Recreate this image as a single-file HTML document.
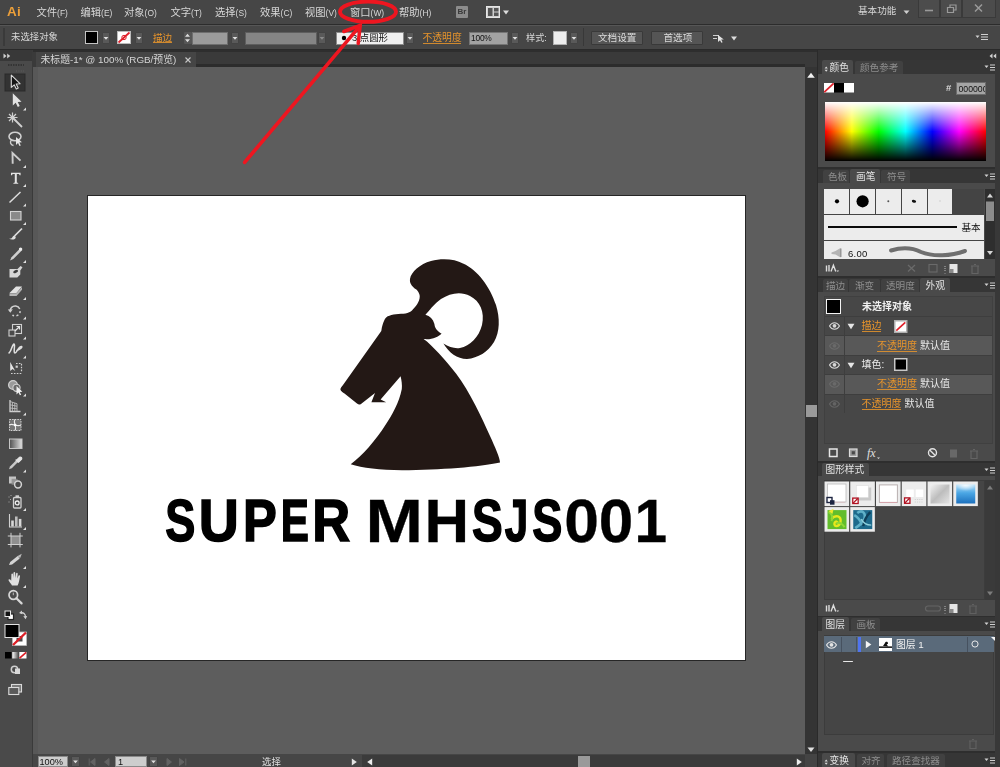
<!DOCTYPE html>
<html lang="zh"><head><meta charset="utf-8"><title>Adobe Illustrator</title>
<style>
html,body{margin:0;padding:0}
body{width:1000px;height:767px;position:relative;overflow:hidden;background:#5d5d5d;font-family:"Liberation Sans","Noto Sans CJK SC",sans-serif}
#app{position:absolute;left:0;top:0;width:1000px;height:767px;overflow:hidden}
#app>div,#app>svg{position:absolute;display:block}
.t{will-change:opacity;opacity:.9999}
.t{white-space:nowrap}
.b{font-weight:700}
</style></head>
<body>
<div id="app">
<div style="left:33px;top:67px;width:772px;height:687px;background:#5d5d5d;"></div>
<div style="left:33px;top:67px;width:5px;height:687px;background:#585858;"></div>
<div style="left:87px;top:195px;width:659px;height:466px;background:#fff;box-sizing:border-box;border:1px solid #262626"></div>
<svg style="left:330px;top:250px;" width="180" height="230" viewBox="330 250 180 230"><path d="M410,279 C411,272 420,264 431,261 C442,258 455,259 463,263.5 C478,270 490,287 496,305 C500,318 500,332 494,342 C488,352 478,358 467,359 C457,359 449,353 443.4,343.6 C449,347 455,349 460,348 C470,346 479,337 482,325 C485,312 480,301 470,296 C461,291 450,293 441,299 C434,304 429,311 425.4,314.8 C430,316 433,319 434.4,324 C435,328 436,330 441.6,333.7 C438,337 432,340 423.6,339.1 C432,345 445,360 456,373.4 C470,392 482,418 490,436 C495,447 500,458 500,462.5 C480,467 440,470 402,470.2 C380,470 362,468 350.7,464.3 C362,456 376,440 385.4,425 C392,415 399,403 401.8,389 C402.3,385 401.5,380 400.6,376.2 L380.6,399.4 L386.2,402.2 L371.4,402.2 L375,393 L361,404 C359.5,405 358.3,404.6 357,403.6 L344.5,393.5 C341,391 340,390 340.6,388.5 C341.5,386.5 342.2,386 343,385 L381.3,331 C382,326 383,323 384,321 C385,318 387,316 389.4,315.7 C392,314.5 395,314 398.4,313.9 C402,313.8 405,313.8 407.4,313 C410,312 412,311 412.8,309.4 C415,307 417,305 418.2,302.2 C419.5,300 420,297 419.6,295 C419,293 418,291 416.4,289.6 C414,288 412,286 411,284.2 C410,282.5 409.8,281 410,279 Z" fill="#231815"/></svg>
<svg style="left:150px;top:480px;" width="540" height="80" viewBox="150 480 540 80"><g font-family="Liberation Sans, sans-serif" font-weight="700" font-size="61" fill="#000"><text transform="translate(165.29,541.23) scale(0.7393,0.9633)" stroke="#000" stroke-width="1.6" stroke-linejoin="miter">S</text><text transform="translate(198.80,541.23) scale(0.9094,0.9633)" stroke="#000" stroke-width="1.6" stroke-linejoin="miter">U</text><text transform="translate(243.08,541.23) scale(0.8305,0.9633)" stroke="#000" stroke-width="1.6" stroke-linejoin="miter">P</text><text transform="translate(280.73,541.23) scale(0.6923,0.9633)" stroke="#000" stroke-width="1.6" stroke-linejoin="miter">E</text><text transform="translate(312.18,541.23) scale(0.8606,0.9633)" stroke="#000" stroke-width="1.6" stroke-linejoin="miter">R</text><text transform="translate(365.55,541.85) scale(1.1315,0.9929)" stroke="#000" stroke-width="0.3" stroke-linejoin="miter">M</text><text transform="translate(424.42,541.85) scale(1.0121,0.9929)" stroke="#000" stroke-width="0.3" stroke-linejoin="miter">H</text><text transform="translate(472.08,541.23) scale(0.7550,0.9633)" stroke="#000" stroke-width="1.6" stroke-linejoin="miter">S</text><text transform="translate(504.71,541.23) scale(0.6901,0.9633)" stroke="#000" stroke-width="1.6" stroke-linejoin="miter">J</text><text transform="translate(532.29,541.23) scale(0.7393,0.9633)" stroke="#000" stroke-width="1.6" stroke-linejoin="miter">S</text><text transform="translate(564.28,541.85) scale(1.0235,0.9929)" stroke="#000" stroke-width="0.3" stroke-linejoin="miter">0</text><text transform="translate(598.70,541.85) scale(1.0167,0.9929)" stroke="#000" stroke-width="0.3" stroke-linejoin="miter">0</text><text transform="translate(634.45,541.85) scale(0.9622,0.9929)" stroke="#000" stroke-width="0.3" stroke-linejoin="miter">1</text></g></svg>
<div style="left:0px;top:0px;width:1000px;height:24px;background:#464646;"></div>
<div style="left:0px;top:24px;width:1000px;height:1px;background:#2c2c2c;"></div>
<div style="left:0px;top:25px;width:1000px;height:24px;background:#464646;"></div>
<div style="left:0px;top:25px;width:1000px;height:1px;background:#565656;"></div>
<div style="left:0px;top:49px;width:1000px;height:1px;background:#2a2a2a;"></div>
<div style="left:33px;top:50px;width:786px;height:17px;background:#3a3a3a;"></div>
<div style="left:33px;top:50px;width:786px;height:1.5px;background:#2e2e2e;"></div>
<div style="left:196px;top:64px;width:609px;height:3px;background:#2c2c2c;"></div>
<div style="left:36px;top:51.5px;width:160px;height:15.5px;background:#454545;"></div>
<div style="left:0px;top:50px;width:33px;height:717px;background:#4a4a4a;"></div>
<div style="left:0px;top:50px;width:33px;height:11px;background:#383838;"></div>
<div style="left:32px;top:50px;width:1px;height:717px;background:#3a3a3a;"></div>
<div style="left:805px;top:67px;width:12px;height:687px;background:#343434;"></div>
<div style="left:806px;top:405px;width:11px;height:11.5px;background:#9a9a9a;"></div>
<div style="left:33px;top:754px;width:786px;height:13px;background:#464646;"></div>
<div style="left:817px;top:50px;width:1px;height:717px;background:#2a2a2a;"></div>
<div style="left:818px;top:50px;width:182px;height:717px;background:#333333;"></div>
<div class="t" style="left:7px;top:2px;height:20px;line-height:20px;font-size:13.4px;font-weight:700;color:#eda03a;letter-spacing:0.3px">Ai</div>
<div class="t " aria-label="文件(F)" style="left:36.5px;top:6px;height:14px;line-height:14px;font-size:10.3px;color:#d8d8d8;">文件<span style="font-size:0.82em">(F)</span></div>
<div class="t " aria-label="编辑(E)" style="left:80.5px;top:6px;height:14px;line-height:14px;font-size:10.3px;color:#d8d8d8;">编辑<span style="font-size:0.82em">(E)</span></div>
<div class="t " aria-label="对象(O)" style="left:124px;top:6px;height:14px;line-height:14px;font-size:10.3px;color:#d8d8d8;">对象<span style="font-size:0.82em">(O)</span></div>
<div class="t " aria-label="文字(T)" style="left:170.5px;top:6px;height:14px;line-height:14px;font-size:10.3px;color:#d8d8d8;">文字<span style="font-size:0.82em">(T)</span></div>
<div class="t " aria-label="选择(S)" style="left:215px;top:6px;height:14px;line-height:14px;font-size:10.3px;color:#d8d8d8;">选择<span style="font-size:0.82em">(S)</span></div>
<div class="t " aria-label="效果(C)" style="left:260px;top:6px;height:14px;line-height:14px;font-size:10.3px;color:#d8d8d8;">效果<span style="font-size:0.82em">(C)</span></div>
<div class="t " aria-label="视图(V)" style="left:305px;top:6px;height:14px;line-height:14px;font-size:10.3px;color:#d8d8d8;">视图<span style="font-size:0.82em">(V)</span></div>
<div class="t " aria-label="窗口(W)" style="left:350px;top:6px;height:14px;line-height:14px;font-size:10.3px;color:#d8d8d8;">窗口<span style="font-size:0.82em">(W)</span></div>
<div class="t " aria-label="帮助(H)" style="left:399px;top:6px;height:14px;line-height:14px;font-size:10.3px;color:#d8d8d8;">帮助<span style="font-size:0.82em">(H)</span></div>
<div style="left:456px;top:6px;width:12px;height:12px;background:#8c8c8c;border-radius:1px"></div>
<div class="t" style="left:457.5px;top:7px;height:10px;line-height:10px;font-size:8px;font-weight:700;color:#3a3a3a">Br</div>
<svg style="left:486px;top:6px;" width="24" height="12" viewBox="0 0 24 12"><rect x="0.5" y="0.5" width="13" height="11" fill="#d0d0d0" stroke="#e6e6e6"/><rect x="2" y="2" width="4.5" height="8" fill="#555"/><rect x="8" y="2" width="4.5" height="3.5" fill="#555"/><rect x="8" y="6.5" width="4.5" height="3.5" fill="#555"/><path d="M17,4.5 h6 l-3,4 z" fill="#dcdcdc"/></svg>
<div class="t " aria-label="基本功能" style="left:858px;top:3.5px;height:14px;line-height:14px;font-size:9.6px;color:#d8d8d8;">基本功能</div>
<svg style="left:903px;top:10px;" width="7" height="5" viewBox="0 0 7 5"><path d="M0.5,0.5 h6 l-3,3.6 z" fill="#cfcfcf"/></svg>
<div style="left:918px;top:0px;width:22px;height:18px;background:#4c4c4c;box-sizing:border-box;border:1px solid #3a3a3a;border-top:0"></div>
<div style="left:940px;top:0px;width:22px;height:18px;background:#4c4c4c;box-sizing:border-box;border:1px solid #3a3a3a;border-top:0"></div>
<div style="left:962px;top:0px;width:34px;height:18px;background:#4c4c4c;box-sizing:border-box;border:1px solid #3a3a3a;border-top:0"></div>
<svg style="left:918px;top:0px;" width="80" height="18" viewBox="0 0 80 18"><path d="M7,10.5 h8" stroke="#9a9a9a" stroke-width="1.6"/><path d="M29.5,7.5 h6 v5 h-6 z M32,7 v-2 h6 v5 h-2" fill="none" stroke="#9a9a9a" stroke-width="1.2"/><path d="M57,4.5 l7,7 M64,4.5 l-7,7" stroke="#9a9a9a" stroke-width="1.5"/></svg>
<div style="left:3px;top:28px;width:2px;height:18px;background:#3a3a3a;"></div>
<div class="t " aria-label="未选择对象" style="left:11px;top:30px;height:14px;line-height:14px;font-size:9.4px;color:#d8d8d8;">未选择对象</div>
<div style="left:85px;top:31px;width:13px;height:13px;background:#000;box-sizing:border-box;border:1px solid #c4c4c4"></div>
<div style="left:101.5px;top:32px;width:8px;height:12px;background:#595959;box-sizing:border-box;border:1px solid #434343;border-radius:1px"></div>
<svg style="left:101.5px;top:32px;" width="8" height="12" viewBox="0 0 8 12"><path d="M1.6,5 h4.8 l-2.4,2.8 z" fill="#e0e0e0"/></svg>
<svg style="left:117px;top:31px;" width="14" height="13" viewBox="0 0 14 13"><rect x="0.5" y="0.5" width="13" height="12" fill="#fff" stroke="#bbb"/><path d="M1.5,11.5 L12.5,1.5" stroke="#e0202a" stroke-width="1.8"/><circle cx="7" cy="6.5" r="2.2" fill="none" stroke="#e0202a" stroke-width="1"/></svg>
<div style="left:134.5px;top:32px;width:8px;height:12px;background:#595959;box-sizing:border-box;border:1px solid #434343;border-radius:1px"></div>
<svg style="left:134.5px;top:32px;" width="8" height="12" viewBox="0 0 8 12"><path d="M1.6,5 h4.8 l-2.4,2.8 z" fill="#e0e0e0"/></svg>
<div style="left:153.3px;top:42.492px;width:18.6px;height:1px;background:#e8952c;opacity:.85"></div>
<div class="t " aria-label="描边" style="left:153px;top:30.5px;height:14px;line-height:14px;font-size:9.6px;color:#e8952c;">描边</div>
<div style="left:183.5px;top:32px;width:8px;height:12px;background:#565656;border-radius:1px"></div>
<svg style="left:184px;top:32px;" width="7" height="12" viewBox="0 0 7 12"><path d="M1,4.8 l2.500,-3 l2.500,3 z M1,7.2 l2.500,3 l2.500,-3 z" fill="#dcdcdc"/></svg>
<div style="left:192px;top:32px;width:36px;height:12.5px;background:#9b9b9b;box-sizing:border-box;border:1px solid #6e6e6e"></div>
<div style="left:230.5px;top:32px;width:8px;height:12px;background:#595959;box-sizing:border-box;border:1px solid #434343;border-radius:1px"></div>
<svg style="left:230.5px;top:32px;" width="8" height="12" viewBox="0 0 8 12"><path d="M1.6,5 h4.8 l-2.4,2.8 z" fill="#e0e0e0"/></svg>
<div style="left:245px;top:32px;width:71.5px;height:12.5px;background:#858585;box-sizing:border-box;border:1px solid #5e5e5e"></div>
<div style="left:318px;top:32px;width:8px;height:12px;background:#595959;box-sizing:border-box;border:1px solid #434343;border-radius:1px"></div>
<svg style="left:318px;top:32px;" width="8" height="12" viewBox="0 0 8 12"><path d="M1.6,5 h4.8 l-2.4,2.8 z" fill="#8a8a8a"/></svg>
<div style="left:335.5px;top:32px;width:68px;height:12.5px;background:#efefef;box-sizing:border-box;border:1px solid #8a8a8a"></div>
<svg style="left:340px;top:34px;" width="8" height="8" viewBox="0 0 8 8"><circle cx="4" cy="4" r="2.2" fill="#000"/></svg>
<div class="t " aria-label="3 点圆形" style="left:352px;top:31px;height:14px;line-height:14px;font-size:9.4px;color:#111;">3 点圆形</div>
<div style="left:406px;top:32px;width:8px;height:12px;background:#595959;box-sizing:border-box;border:1px solid #434343;border-radius:1px"></div>
<svg style="left:406px;top:32px;" width="8" height="12" viewBox="0 0 8 12"><path d="M1.6,5 h4.8 l-2.4,2.8 z" fill="#e0e0e0"/></svg>
<div style="left:422.8px;top:42.596px;width:38.6px;height:1px;background:#e8952c;opacity:.85"></div>
<div class="t " aria-label="不透明度" style="left:422.5px;top:30.5px;height:14px;line-height:14px;font-size:9.8px;color:#e8952c;">不透明度</div>
<div style="left:468.5px;top:31.5px;width:39px;height:13px;background:#a2a2a2;box-sizing:border-box;border:1px solid #757575"></div>
<div class="t" style="left:471px;top:31.5px;height:12px;line-height:12px;font-size:8.4px;color:#111;letter-spacing:-0.2px">100%</div>
<div style="left:510.5px;top:32px;width:8px;height:12px;background:#595959;box-sizing:border-box;border:1px solid #434343;border-radius:1px"></div>
<svg style="left:510.5px;top:32px;" width="8" height="12" viewBox="0 0 8 12"><path d="M1.6,5 h4.8 l-2.4,2.8 z" fill="#e0e0e0"/></svg>
<div class="t " aria-label="样式:" style="left:526px;top:30.5px;height:14px;line-height:14px;font-size:9.2px;color:#d8d8d8;">样式:</div>
<div style="left:553px;top:31px;width:13.5px;height:13.5px;background:#ededed;box-sizing:border-box;border:1px solid #b0b0b0"></div>
<div style="left:569.5px;top:32px;width:8px;height:12px;background:#595959;box-sizing:border-box;border:1px solid #434343;border-radius:1px"></div>
<svg style="left:569.5px;top:32px;" width="8" height="12" viewBox="0 0 8 12"><path d="M1.6,5 h4.8 l-2.4,2.8 z" fill="#e0e0e0"/></svg>
<div style="left:583px;top:28px;width:1px;height:18px;background:#383838;"></div>
<div style="left:591px;top:31px;width:52px;height:14px;background:#555;box-sizing:border-box;border:1px solid #393939;border-radius:1px"></div>
<div class="t " aria-label="文档设置" style="left:598px;top:31px;height:14px;line-height:14px;font-size:9.6px;color:#dcdcdc;">文档设置</div>
<div style="left:651px;top:31px;width:52px;height:14px;background:#555;box-sizing:border-box;border:1px solid #393939;border-radius:1px"></div>
<div class="t " aria-label="首选项" style="left:663.5px;top:31px;height:14px;line-height:14px;font-size:9.6px;color:#dcdcdc;">首选项</div>
<svg style="left:712px;top:32px;" width="26" height="12" viewBox="0 0 26 12"><path d="M1,3.5 h6 M1,6.5 h4" stroke="#cfcfcf" stroke-width="1"/><path d="M6,3 v7 l2,-1.8 l1.4,2.6 l1.2,-.6 l-1.4,-2.6 h2.6 z" fill="#e4e4e4"/><path d="M19,4.5 h6 l-3,4 z" fill="#dcdcdc"/></svg>
<svg style="left:975px;top:32px;" width="14" height="10" viewBox="0 0 14 10"><path d="M0.5,3.5 h4 l-2,2.6 z" fill="#d0d0d0"/><path d="M6,2.5 h7 M6,5 h7 M6,7.5 h7" stroke="#d0d0d0" stroke-width="1"/></svg>
<div class="t " aria-label="未标题-1* @ 100% (RGB/预览)" style="left:40.5px;top:52.8px;height:14px;line-height:14px;font-size:9.85px;color:#d6d6d6;">未标题-1* @ 100% (RGB/预览)</div>
<svg style="left:184px;top:56px;" width="8" height="8" viewBox="0 0 8 8"><path d="M1.5,1.5 l5,5 M6.5,1.5 l-5,5" stroke="#c8c8c8" stroke-width="1.1"/></svg>
<svg style="left:3px;top:53px;" width="8" height="6" viewBox="0 0 8 6"><path d="M0.5,0.5 l3,2.5 l-3,2.5 z M4.2,0.5 l3,2.5 l-3,2.5 z" fill="#d0d0d0"/></svg>
<svg style="left:230px;top:0px;" width="180" height="175" viewBox="230 0 180 175"><g fill="none" stroke="#ee1620" stroke-linecap="round"><ellipse cx="368" cy="11.7" rx="28" ry="10.1" stroke-width="3.9"/><path d="M244.5,162.5 L360,25.8" stroke-width="3.5"/><path d="M343.8,31.5 L360.2,25.3 L358.2,43.5" stroke-width="3.5" stroke-linejoin="miter"/></g></svg>
<svg style="left:0px;top:50px;" width="33" height="717" viewBox="0 50 33 717"><path d="M8,65 h16" stroke="#2e2e2e" stroke-width="1.6" stroke-dasharray="1.5,1"/><path d="M16,71 h8" stroke="#5c5c5c" stroke-width="1.2" stroke-dasharray="1,1.4"/><rect x="5" y="74" width="20" height="17" fill="#333" stroke="#2a2a2a" stroke-width="1"/><g transform="translate(7,74)"><path d="M4.3,1.2 L4.3,13.4 L7.2,10.8 L9.3,15 L11.2,14.1 L9.2,10 L13,9.7 Z" fill="#141414" stroke="#d8d8d8" stroke-width="1.1" stroke-linejoin="round"/></g><g transform="translate(7,93)"><path d="M4.3,1.2 L4.3,13.4 L7.2,10.8 L9.3,15 L11.2,14.1 L9.2,10 L13,9.7 Z" fill="#e2e2e2" transform="translate(1.5,-1)"/></g><path d="M26,110.5 l-3,0 l3,-3 z" fill="#e0e0e0"/><g transform="translate(7,112)"><path d="M6.5,6.5 L15,15" stroke="#d0d0d0" stroke-width="1.8"/><path d="M5.5,0.5 v10 M0.5,5.5 h10 M2,2 l7,7 M9,2 l-7,7" stroke="#d0d0d0" stroke-width="1.2"/></g><g transform="translate(7,131)"><ellipse cx="8" cy="5.5" rx="6" ry="4.2" fill="none" stroke="#d0d0d0" stroke-width="1.6"/><path d="M4.5,9 c-2,2 -1,5 2,5.5" fill="none" stroke="#d0d0d0" stroke-width="1.4"/><path d="M9,6 l0,8 l2,-2 l1.5,3 l1.3,-.6 l-1.5,-3 l2.7,-.2 z" fill="#e6e6e6"/></g><g transform="translate(7,150.5)"><path d="M5.7,13.2 L5.5,2.6 L13.5,10.1" fill="none" stroke="#cdcdcd" stroke-width="1.9" stroke-linejoin="miter"/></g><path d="M26,168 l-3,0 l3,-3 z" fill="#e0e0e0"/><g transform="translate(7,169.5)"><path d="M4,3.2 h9.6 v2.6 h-1 l-.6,-1.2 h-2.2 v8.3 l1.4,.5 v.8 h-4.8 v-.8 l1.4,-.5 v-8.3 h-2.2 l-.6,1.2 h-1 z" fill="#e4e4e4"/></g><path d="M26,187 l-3,0 l3,-3 z" fill="#e0e0e0"/><g transform="translate(7,189)"><path d="M2.5,13.5 L13.5,3" stroke="#dcdcdc" stroke-width="1.5"/></g><path d="M26,206.5 l-3,0 l3,-3 z" fill="#e0e0e0"/><g transform="translate(7,207.5)"><rect x="3.5" y="4" width="10.5" height="8.5" fill="#8a8a8a" stroke="#d4d4d4" stroke-width="1.1"/></g><path d="M26,225 l-3,0 l3,-3 z" fill="#e0e0e0"/><g transform="translate(7,226)"><path d="M15,2.5 L7.5,10" stroke="#dedede" stroke-width="1.7"/><path d="M1.8,12.6 c2,.4 3.2,-.3 4.2,-2.4 c1,-1 2.6,-.2 2.7,1 c.2,2 -3.5,3.4 -6.9,1.4 z" fill="#dedede"/></g><g transform="translate(7,245.5)"><path d="M13.5,2.5 l-9,9.2 l-1.5,3.2 l3.3,-1.3 l9,-9.2 z" fill="#cfcfcf"/><circle cx="13.6" cy="3.6" r="1.7" fill="#ededed"/></g><path d="M26,263 l-3,0 l3,-3 z" fill="#e0e0e0"/><g transform="translate(7,263.5)"><path d="M2.5,5.5 h8 l3,-3 l2,1.3 l-2.2,3.2 v4 l-3,3 h-7.8 z" fill="#d6d6d6"/><ellipse cx="8.6" cy="8" rx="2.6" ry="1.4" transform="rotate(-25 8.6 8)" fill="#3c3c3c"/></g><g transform="translate(7,282.5)"><path d="M2.5,10.5 L9,4 h6 L9.5,10.5 Z" fill="#e2e2e2"/><path d="M2.5,10.8 h7 L15,4.6 v2.6 L9.5,13.6 h-7 z" fill="#b4b4b4"/></g><path d="M26,300 l-3,0 l3,-3 z" fill="#e0e0e0"/><g transform="translate(7,302)"><path d="M3.2,9.5 a5,5 0 1 1 2.2,3.6" fill="none" stroke="#d0d0d0" stroke-width="1.5" stroke-dasharray="14,2.2,2,2.2,2,2.2"/><path d="M.8,7.5 l2.6,3.2 l2.4,-3.4 z" fill="#d0d0d0"/></g><path d="M26,319.5 l-3,0 l3,-3 z" fill="#e0e0e0"/><g transform="translate(7,322)"><rect x="5.5" y="2.5" width="9" height="9" fill="none" stroke="#d0d0d0" stroke-width="1.1"/><rect x="2" y="8" width="6" height="6" fill="#4a4a4a" stroke="#d0d0d0" stroke-width="1.1"/><path d="M8,9 l4.5,-4.5 m0,3 v-3 h-3" fill="none" stroke="#e6e6e6" stroke-width="1.2"/></g><path d="M26,339.5 l-3,0 l3,-3 z" fill="#e0e0e0"/><g transform="translate(7,341)"><path d="M2,12 c2,-1 3,-8 5,-9 c1.5,0 -1,9 1,9 c2,0 3,-6.5 6.5,-6.5 c1.4,.6 -2,3.4 -4.6,4" fill="none" stroke="#e0e0e0" stroke-width="1.5" stroke-linecap="round"/></g><path d="M26,358.5 l-3,0 l3,-3 z" fill="#e0e0e0"/><g transform="translate(7,360)"><path d="M3.2,2 v9 l2.4,-2 l2.6,2 z" fill="#e4e4e4"/><path d="M9,3.5 h5.5 v8" fill="none" stroke="#d0d0d0" stroke-width="1.2" stroke-dasharray="1.6,1.3"/><path d="M4,13.5 h10.5" stroke="#d0d0d0" stroke-width="1.2" stroke-dasharray="1.6,1.3"/><rect x="8.6" y="5.6" width="2.2" height="2.2" fill="#d0d0d0"/></g><g transform="translate(7,379)"><circle cx="6" cy="6" r="4.4" fill="#9a9a9a" stroke="#d0d0d0" stroke-width="1.2"/><circle cx="9.5" cy="8.8" r="3.6" fill="#6a6a6a" stroke="#d0d0d0" stroke-width="1.1"/><path d="M9.5,7 v8.5 l2,-2 l1.4,2.8 l1.3,-.6 l-1.4,-2.8 l2.6,-.2 z" fill="#f0f0f0"/></g><path d="M26,396.5 l-3,0 l3,-3 z" fill="#e0e0e0"/><g transform="translate(7,398)"><path d="M3,2 v11.5 h10.5" fill="none" stroke="#d0d0d0" stroke-width="1.3"/><path d="M3,3.5 l7,2.2 v7.8 M3,6.8 l7,1.4 M3,10 l7,.8 M5.4,4.2 v9.3 M7.8,5 v8.5" fill="none" stroke="#bdbdbd" stroke-width=".9"/></g><path d="M26,415.5 l-3,0 l3,-3 z" fill="#e0e0e0"/><g transform="translate(7,417)"><rect x="2.5" y="2.5" width="11.5" height="11" fill="#757575" stroke="#d0d0d0" stroke-width="1" stroke-dasharray="1.6,1"/><path d="M2.5,8 c3,-2.5 7,2.5 11.5,0 M8,2.5 c-2.5,3 2.5,7 0,11" fill="none" stroke="#ececec" stroke-width="1.1"/><circle cx="8.2" cy="8" r="1.3" fill="#fff"/></g><defs><linearGradient id="lg1"><stop offset="0" stop-color="#505050"/><stop offset="1" stop-color="#e2e2e2"/></linearGradient></defs><g transform="translate(7,436)"><rect x="2.5" y="3" width="12.5" height="9.5" fill="url(#lg1)" stroke="#c6c6c6" stroke-width="1"/></g><g transform="translate(7,455)"><path d="M2,14.2 l1,-2.8 l6.2,-6.2 l1.8,1.8 l-6.2,6.2 z" fill="#c9c9c9"/><path d="M8.6,4.6 l3,3 M9.8,5 l2.8,-2.8 a1.5,1.5 0 0 1 2,2 l-2.8,2.8 z" fill="#e4e4e4" stroke="#e4e4e4" stroke-width="1.2"/></g><path d="M26,472.5 l-3,0 l3,-3 z" fill="#e0e0e0"/><g transform="translate(7,474)"><rect x="2" y="2.5" width="7" height="7" fill="#c4c4c4"/><rect x="4.6" y="4.8" width="6" height="6" fill="#8c8c8c" opacity=".8"/><circle cx="11" cy="10.5" r="3.4" fill="#4a4a4a" stroke="#d4d4d4" stroke-width="1.5"/></g><g transform="translate(7,493.5)"><rect x="6.5" y="4" width="7.5" height="10.5" rx="1" fill="none" stroke="#d0d0d0" stroke-width="1.3"/><rect x="8.5" y="1.8" width="3.5" height="2" fill="#d0d0d0"/><circle cx="10.2" cy="9.4" r="1.9" fill="none" stroke="#f0f0f0" stroke-width="1.3"/><path d="M2,3 v1 M3.5,5.5 v1 M2,8 v1 M4,1.5 v1" stroke="#aaa" stroke-width="1"/></g><path d="M26,511 l-3,0 l3,-3 z" fill="#e0e0e0"/><g transform="translate(7,512.5)"><path d="M2.5,1.5 v13 h12.5" fill="none" stroke="#d0d0d0" stroke-width="1.1"/><rect x="4.2" y="8" width="2.6" height="6" fill="#d8d8d8"/><rect x="8" y="4" width="2.6" height="10" fill="#bdbdbd"/><rect x="11.8" y="6.4" width="2.6" height="7.6" fill="#d8d8d8"/></g><path d="M26,530 l-3,0 l3,-3 z" fill="#e0e0e0"/><g transform="translate(7,532)"><rect x="4" y="4" width="9" height="8.5" fill="#8f8f8f"/><path d="M4,.8 v14.6 M13,.8 v14.6 M.8,4 h15 M.8,12.5 h15" stroke="#d0d0d0" stroke-width="1"/></g><g transform="translate(7,551.5)"><path d="M2,13.5 l1.2,-3 l7.5,-6 l2,2.4 l-7.6,6 z" fill="#d4d4d4"/><path d="M10.2,4.8 l4.6,-2.6 l-1.6,4.4 z" fill="#bcbcbc"/></g><path d="M26,569 l-3,0 l3,-3 z" fill="#e0e0e0"/><g transform="translate(7,570.5)"><path d="M5,15 c-1,-2 -3,-4 -3.6,-5.6 c.5,-1 1.8,-.6 2.8,.8 l.2,-6.4 c.2,-1 1.5,-1 1.6,0 l.3,3.6 l.2,-5.2 c.2,-1 1.6,-1 1.7,0 l.2,5.2 l.7,-4.4 c.3,-1 1.6,-.8 1.6,.2 l-.4,4.8 l1.2,-2.8 c.5,-.9 1.7,-.4 1.5,.6 c-.6,3.4 -1,6.6 -2.4,9.2 z" fill="#e0e0e0"/></g><path d="M26,588 l-3,0 l3,-3 z" fill="#e0e0e0"/><g transform="translate(7,589)"><circle cx="6.3" cy="6" r="4.3" fill="none" stroke="#d6d6d6" stroke-width="1.7"/><path d="M9.4,9.2 L14.6,14.4" stroke="#d6d6d6" stroke-width="2.2" stroke-linecap="round"/><path d="M6.3,3.6 v2.6" stroke="#bdbdbd" stroke-width="1"/></g><rect x="8" y="614" width="5.5" height="5.5" fill="#fff" stroke="#222" stroke-width="1.2"/><rect x="5" y="611" width="5.5" height="5.5" fill="#111" stroke="#e8e8e8" stroke-width="1"/><path d="M20.5,613 c3,-1 5,1 5,4" fill="none" stroke="#cfcfcf" stroke-width="1.3"/><path d="M21.8,610.5 l-2.8,2.6 l3.4,1.2 z M23.3,616.2 l2.3,3 l1.6,-3.2 z" fill="#cfcfcf"/><rect x="12.5" y="632" width="14" height="13.5" fill="#fff" stroke="#bbb" stroke-width=".8"/><rect x="16.5" y="636" width="6" height="5.5" fill="#4a4a4a"/><path d="M13,645 L26,632.5" stroke="#dc1f26" stroke-width="2.4"/><rect x="5" y="624.5" width="14" height="13" fill="#000" stroke="#e2e2e2" stroke-width="1"/><rect x="5" y="652" width="6.5" height="6.5" fill="#000"/><rect x="12.3" y="652" width="6" height="6.5" fill="url(#lg2)"/><rect x="19.3" y="652" width="7.2" height="6.5" fill="#fff"/><path d="M19.6,658.2 L26.2,652.3" stroke="#dc1f26" stroke-width="1.6"/><defs><linearGradient id="lg2"><stop offset="0" stop-color="#fff"/><stop offset="1" stop-color="#555"/></linearGradient></defs><circle cx="14.5" cy="669.5" r="3.2" fill="none" stroke="#cfcfcf" stroke-width="1.5"/><rect x="15" y="668.5" width="5" height="5.5" fill="#d9d9d9"/><rect x="11.5" y="684.5" width="10" height="7.5" fill="#777" stroke="#dadada" stroke-width="1.1"/><rect x="8.8" y="687.5" width="10" height="7" fill="#5a5a5a" stroke="#dadada" stroke-width="1.1"/></svg>
<div style="left:818px;top:50px;width:182px;height:10px;background:#343434;"></div>
<svg style="left:989px;top:53px;" width="8" height="6" viewBox="0 0 8 6"><path d="M3.5,0.5 l-3,2.5 l3,2.5 z M7.2,0.5 l-3,2.5 l3,2.5 z" fill="#d0d0d0"/></svg>
<div style="left:818px;top:60px;width:182px;height:14px;background:#363636;"></div>
<div style="left:822px;top:60px;width:31px;height:14px;background:#4a4a4a;border-radius:2px 2px 0 0"></div>
<div class="t " aria-label="颜色" style="left:829.5px;top:60.9px;height:14px;line-height:14px;font-size:9.7px;color:#e2e2e2;">颜色</div>
<div style="left:855px;top:61px;width:48px;height:13px;background:#414141;border-radius:2px 2px 0 0"></div>
<div class="t " aria-label="颜色参考" style="left:860px;top:60.9px;height:14px;line-height:14px;font-size:9.6px;color:#8e8e8e;">颜色参考</div>
<svg style="left:984px;top:64px;" width="12" height="8" viewBox="0 0 12 8"><path d="M0.5,1.5 h4 l-2,2.6 z" fill="#d0d0d0"/><path d="M6,1 h6 M6,3.5 h6 M6,6 h6" stroke="#d0d0d0" stroke-width="1"/></svg>
<svg style="left:823.5px;top:64.8px;" width="5" height="8" viewBox="0 0 5 8"><path d="M0.6,3.6 l1.6,-2 l1.6,2 z M0.6,4.8 l1.6,2 l1.6,-2 z" fill="#dadada"/></svg>
<div style="left:818px;top:74px;width:177px;height:93px;background:#4a4a4a;"></div>
<svg style="left:824px;top:83px;" width="31" height="10" viewBox="0 0 31 10"><rect x="0" y="0" width="10" height="9.5" fill="#fff"/><path d="M0.3,9.2 L9.7,0.3" stroke="#e0202a" stroke-width="1.7"/><rect x="10" y="0" width="10" height="9.5" fill="#000"/><rect x="20" y="0" width="10" height="9.5" fill="#fff"/></svg>
<div class="t" style="left:946px;top:82px;height:12px;line-height:12px;font-size:9.5px;font-weight:700;color:#dcdcdc">#</div>
<div style="left:955.5px;top:81.5px;width:30px;height:13.5px;background:#a4a4a4;box-sizing:border-box;border:1px solid #6c6c6c;overflow:hidden"></div>
<div class="t" style="left:958.5px;top:82.5px;width:26.5px;overflow:hidden;height:12px;line-height:12px;font-size:8.7px;color:#111;letter-spacing:0">000000</div>
<div style="left:825px;top:102px;width:160.5px;height:59px;background:linear-gradient(to bottom,#fff 0%,rgba(255,255,255,0) 50%,rgba(0,0,0,0) 50%,#000 100%),linear-gradient(to right,#f00 0%,#ff0 16.67%,#0f0 33.33%,#0ff 50%,#00f 66.67%,#f0f 83.33%,#f00 100%)"></div>
<div style="left:818px;top:167px;width:182px;height:2px;background:#2e2e2e;"></div>
<div style="left:818px;top:169px;width:182px;height:14px;background:#363636;"></div>
<div style="left:823px;top:170px;width:26px;height:13px;background:#414141;border-radius:2px 2px 0 0"></div>
<div class="t " aria-label="色板" style="left:828px;top:169.9px;height:14px;line-height:14px;font-size:9.6px;color:#8e8e8e;">色板</div>
<div style="left:850px;top:169px;width:30px;height:14px;background:#4a4a4a;border-radius:2px 2px 0 0"></div>
<div class="t " aria-label="画笔" style="left:856px;top:169.9px;height:14px;line-height:14px;font-size:9.7px;color:#e2e2e2;">画笔</div>
<div style="left:881px;top:170px;width:29px;height:13px;background:#414141;border-radius:2px 2px 0 0"></div>
<div class="t " aria-label="符号" style="left:887px;top:169.9px;height:14px;line-height:14px;font-size:9.6px;color:#8e8e8e;">符号</div>
<svg style="left:984px;top:173px;" width="12" height="8" viewBox="0 0 12 8"><path d="M0.5,1.5 h4 l-2,2.6 z" fill="#d0d0d0"/><path d="M6,1 h6 M6,3.5 h6 M6,6 h6" stroke="#d0d0d0" stroke-width="1"/></svg>
<div style="left:818px;top:183px;width:177px;height:93px;background:#4a4a4a;"></div>
<div style="left:824px;top:189px;width:160px;height:70px;background:#444;"></div>
<div style="left:824px;top:189px;width:25.2px;height:25px;background:#ececec;"></div>
<div style="left:850.4px;top:189px;width:24.6px;height:25px;background:#ececec;"></div>
<div style="left:876.2px;top:189px;width:24.6px;height:25px;background:#ececec;"></div>
<div style="left:902px;top:189px;width:24.6px;height:25px;background:#ececec;"></div>
<div style="left:927.8px;top:189px;width:24.6px;height:25px;background:#ececec;"></div>
<svg style="left:824px;top:189px;" width="130" height="25" viewBox="0 0 130 25"><circle cx="13" cy="12.3" r="2.1" fill="#000"/><circle cx="38.6" cy="12.3" r="6.1" fill="#000"/><circle cx="64.3" cy="12.3" r="1" fill="#555"/><ellipse cx="90" cy="12.3" rx="2.2" ry="1.4" fill="#111" transform="rotate(15 90 12.3)"/><circle cx="116" cy="12" r=".8" fill="#ccc"/></svg>
<div style="left:824px;top:215px;width:160px;height:25px;background:#ececec;"></div>
<div style="left:828px;top:226.3px;width:129px;height:1.6px;background:#0a0a0a;"></div>
<div class="t " aria-label="基本" style="left:961.5px;top:220.5px;height:14px;line-height:14px;font-size:9.6px;color:#111;">基本</div>
<div style="left:824px;top:241px;width:160px;height:18px;background:#ececec;"></div>
<svg style="left:830px;top:247px;" width="14" height="12" viewBox="0 0 14 12"><path d="M1.500,5.500 l4,-1.500 l5,-3 v9.500 l-5,-3 l-4,-.5 z" fill="#b4b4b4"/><path d="M10.800,1.500 v8.500" stroke="#8e8e8e" stroke-width="1.3"/></svg>
<div class="t" style="left:848px;top:247.5px;height:12px;line-height:12px;font-size:9.5px;color:#111;letter-spacing:.3px">6.00</div>
<svg style="left:888px;top:243px;" width="82" height="16" viewBox="0 0 82 16"><path d="M3,7.5 c10,-3 20,-3.5 30,1.5 c12,5 30,4 44,-1" fill="none" stroke="#5e5e5e" stroke-width="4" stroke-linecap="round" opacity=".88" style="filter:blur(.5px)"/></svg>
<div style="left:985px;top:189px;width:10px;height:70px;background:#2e2e2e;"></div>
<svg style="left:985px;top:189px;" width="10" height="70" viewBox="0 0 10 70"><path d="M2,8.5 l3,-4 l3,4 z M2,62 l3,4 l3,-4 z" fill="#d6d6d6"/><rect x="1" y="12.5" width="8" height="19.5" fill="#8c8c8c"/></svg>
<svg style="left:824px;top:261px;" width="172" height="14" viewBox="0 0 172 14"><path d="M2.5,10.500 v-6 M5,10.500 v-6.500 M7,10.500 l2.400,-6.300 l2.400,6.300" fill="none" stroke="#dcdcdc" stroke-width="1.4"/><path d="M12.500,9.500 h2.600 l-1.300,1.500 z" fill="#dcdcdc"/><path d="M84,4 l7,6.500 M91,4 l-7,6.500" stroke="#6a6a6a" stroke-width="1.3"/><rect x="105" y="3.5" width="8" height="7.5" fill="none" stroke="#6a6a6a" stroke-width="1.1"/><path d="M125.5,3 h8 v9 h-8 z" fill="#e6e6e6"/><path d="M125.5,8 h4 v4 h-4 z" fill="#8a8a8a"/><path d="M121,5 v5 M121,12 v.6" stroke="#bbb" stroke-width="1" stroke-dasharray="1,1"/><path d="M147,5 h8 M148,5 v7.500 h6 v-7.500 M150,3.500 h2" fill="none" stroke="#646464" stroke-width="1.2"/></svg>
<div style="left:818px;top:276px;width:182px;height:2px;background:#2e2e2e;"></div>
<div style="left:818px;top:278px;width:182px;height:14px;background:#363636;"></div>
<div style="left:823px;top:279px;width:25px;height:13px;background:#414141;border-radius:2px 2px 0 0"></div>
<div class="t " aria-label="描边" style="left:826px;top:278.9px;height:14px;line-height:14px;font-size:9.6px;color:#8e8e8e;">描边</div>
<div style="left:849px;top:279px;width:31px;height:13px;background:#414141;border-radius:2px 2px 0 0"></div>
<div class="t " aria-label="渐变" style="left:855px;top:278.9px;height:14px;line-height:14px;font-size:9.6px;color:#8e8e8e;">渐变</div>
<div style="left:881px;top:279px;width:38px;height:13px;background:#414141;border-radius:2px 2px 0 0"></div>
<div class="t " aria-label="透明度" style="left:886px;top:278.9px;height:14px;line-height:14px;font-size:9.6px;color:#8e8e8e;">透明度</div>
<div style="left:920px;top:278px;width:30px;height:14px;background:#4a4a4a;border-radius:2px 2px 0 0"></div>
<div class="t " aria-label="外观" style="left:925.5px;top:278.9px;height:14px;line-height:14px;font-size:9.7px;color:#e2e2e2;">外观</div>
<svg style="left:984px;top:282px;" width="12" height="8" viewBox="0 0 12 8"><path d="M0.5,1.5 h4 l-2,2.6 z" fill="#d0d0d0"/><path d="M6,1 h6 M6,3.5 h6 M6,6 h6" stroke="#d0d0d0" stroke-width="1"/></svg>
<div style="left:818px;top:292px;width:177px;height:169px;background:#4a4a4a;"></div>
<div style="left:824px;top:296px;width:169px;height:148px;background:#474747;box-sizing:border-box;border:1px solid #404040"></div>
<div style="left:825px;top:335.8px;width:167px;height:19px;background:#585858;"></div>
<div style="left:825px;top:374.6px;width:167px;height:19px;background:#585858;"></div>
<div style="left:825px;top:315.9px;width:167px;height:1px;background:#3e3e3e;"></div>
<div style="left:825px;top:335.3px;width:167px;height:1px;background:#3e3e3e;"></div>
<div style="left:825px;top:354.7px;width:167px;height:1px;background:#3e3e3e;"></div>
<div style="left:825px;top:374.1px;width:167px;height:1px;background:#3e3e3e;"></div>
<div style="left:825px;top:393.5px;width:167px;height:1px;background:#3e3e3e;"></div>
<div style="left:843.5px;top:316.4px;width:1px;height:97px;background:#3e3e3e;"></div>
<div style="left:826px;top:299px;width:15px;height:14.5px;background:#000;box-sizing:border-box;border:1.4px solid #f4f4f4"></div>
<div class="t b" aria-label="未选择对象" style="left:862px;top:299.7px;height:14px;line-height:14px;font-size:10px;color:#f2f2f2;">未选择对象</div>
<svg style="left:829px;top:322px;" width="11" height="8" viewBox="0 0 11 8"><path d="M0.5,4 c2.5,-4.4 7.5,-4.4 10,0 c-2.5,4.4 -7.5,4.4 -10,0 z" fill="none" stroke="#d6d6d6" stroke-width="1.1"/><circle cx="5.5" cy="3.8" r="1.9" fill="#d6d6d6"/></svg>
<svg style="left:847px;top:323px;" width="8" height="7" viewBox="0 0 8 7"><path d="M0.5,0.8 h7 l-3.5,5.4 z" fill="#e6e6e6"/></svg>
<div style="left:861.9px;top:331.2px;width:19.4px;height:1px;background:#e8952c;opacity:.85"></div>
<div class="t " aria-label="描边" style="left:861.6px;top:319px;height:14px;line-height:14px;font-size:10px;color:#e8952c;">描边</div>
<svg style="left:894px;top:319.5px;" width="14" height="13" viewBox="0 0 14 13"><rect x="0.75" y="0.75" width="12" height="11.5" fill="#fff" stroke="#b0b0b0" stroke-width="1.5"/><path d="M2.3,10.6 L11.3,2.3" stroke="#e0202a" stroke-width="1.6"/></svg>
<svg style="left:829px;top:341.5px;" width="11" height="8" viewBox="0 0 11 8"><path d="M0.5,4 c2.5,-4.4 7.5,-4.4 10,0 c-2.5,4.4 -7.5,4.4 -10,0 z" fill="none" stroke="#6a6a6a" stroke-width="1.1"/><circle cx="5.5" cy="3.8" r="1.9" fill="#6a6a6a"/></svg>
<div style="left:877.3px;top:350.7px;width:39.4px;height:1px;background:#e8952c;opacity:.85"></div>
<div class="t " aria-label="不透明度" style="left:877px;top:338.5px;height:14px;line-height:14px;font-size:10px;color:#e8952c;">不透明度</div>
<div class="t " aria-label="默认值" style="left:920px;top:338.5px;height:14px;line-height:14px;font-size:10px;color:#eaeaea;">默认值</div>
<svg style="left:829px;top:361px;" width="11" height="8" viewBox="0 0 11 8"><path d="M0.5,4 c2.5,-4.4 7.5,-4.4 10,0 c-2.5,4.4 -7.5,4.4 -10,0 z" fill="none" stroke="#d6d6d6" stroke-width="1.1"/><circle cx="5.5" cy="3.8" r="1.9" fill="#d6d6d6"/></svg>
<svg style="left:847px;top:362px;" width="8" height="7" viewBox="0 0 8 7"><path d="M0.5,0.8 h7 l-3.5,5.4 z" fill="#e6e6e6"/></svg>
<div class="t " aria-label="填色:" style="left:861.6px;top:357.8px;height:14px;line-height:14px;font-size:10px;color:#eaeaea;">填色:</div>
<svg style="left:894px;top:358.3px;" width="14" height="13" viewBox="0 0 14 13"><rect x="0.75" y="0.75" width="12" height="11.5" fill="#000" stroke="#c8c8c8" stroke-width="1.5"/></svg>
<svg style="left:829px;top:380.3px;" width="11" height="8" viewBox="0 0 11 8"><path d="M0.5,4 c2.5,-4.4 7.5,-4.4 10,0 c-2.5,4.4 -7.5,4.4 -10,0 z" fill="none" stroke="#6a6a6a" stroke-width="1.1"/><circle cx="5.5" cy="3.8" r="1.9" fill="#6a6a6a"/></svg>
<div style="left:877.3px;top:389.4px;width:39.4px;height:1px;background:#e8952c;opacity:.85"></div>
<div class="t " aria-label="不透明度" style="left:877px;top:377.2px;height:14px;line-height:14px;font-size:10px;color:#e8952c;">不透明度</div>
<div class="t " aria-label="默认值" style="left:920px;top:377.2px;height:14px;line-height:14px;font-size:10px;color:#eaeaea;">默认值</div>
<svg style="left:829px;top:399.7px;" width="11" height="8" viewBox="0 0 11 8"><path d="M0.5,4 c2.5,-4.4 7.5,-4.4 10,0 c-2.5,4.4 -7.5,4.4 -10,0 z" fill="none" stroke="#646464" stroke-width="1.1"/><circle cx="5.5" cy="3.8" r="1.9" fill="#646464"/></svg>
<div style="left:861.9px;top:408.8px;width:39.4px;height:1px;background:#e8952c;opacity:.85"></div>
<div class="t " aria-label="不透明度" style="left:861.6px;top:396.6px;height:14px;line-height:14px;font-size:10px;color:#e8952c;">不透明度</div>
<div class="t " aria-label="默认值" style="left:904.5px;top:396.6px;height:14px;line-height:14px;font-size:10px;color:#eaeaea;">默认值</div>
<svg style="left:824px;top:446px;" width="172" height="14" viewBox="0 0 172 14"><rect x="5.5" y="3" width="7.5" height="7.5" fill="none" stroke="#e6e6e6" stroke-width="1.5"/><rect x="25.5" y="3" width="7.5" height="7.5" fill="#9a9a9a" stroke="#dcdcdc" stroke-width="1.2"/><rect x="27.7" y="5.2" width="3.2" height="3.2" fill="#4a4a4a"/><text x="43" y="11" font-family="Liberation Serif, serif" font-style="italic" font-size="12" fill="#e0e0e0">fx</text><path d="M53,11.5 h3 l-1.5,1.6 z" fill="#dcdcdc"/><circle cx="108.5" cy="6.8" r="4" fill="none" stroke="#e2e2e2" stroke-width="1.4"/><path d="M105.7,4 l5.6,5.6" stroke="#e2e2e2" stroke-width="1.4"/><path d="M126,3.5 h7 v8 h-7 z" fill="#686868"/><path d="M146,5 h8 M147,5 v7.5 h6 v-7.5 M149,3.5 h2" fill="none" stroke="#646464" stroke-width="1.2"/></svg>
<div style="left:818px;top:461px;width:182px;height:2px;background:#2e2e2e;"></div>
<div style="left:818px;top:463px;width:182px;height:13px;background:#363636;"></div>
<div style="left:822px;top:463px;width:47px;height:13px;background:#4a4a4a;border-radius:2px 2px 0 0"></div>
<div class="t " aria-label="图形样式" style="left:825.5px;top:463.4px;height:14px;line-height:14px;font-size:9.7px;color:#e2e2e2;">图形样式</div>
<svg style="left:984px;top:467px;" width="12" height="8" viewBox="0 0 12 8"><path d="M0.5,1.5 h4 l-2,2.6 z" fill="#d0d0d0"/><path d="M6,1 h6 M6,3.5 h6 M6,6 h6" stroke="#d0d0d0" stroke-width="1"/></svg>
<div style="left:818px;top:476px;width:177px;height:140px;background:#4a4a4a;"></div>
<div style="left:824px;top:480px;width:161px;height:120px;background:#454545;box-sizing:border-box;border:1px solid #3c3c3c"></div>
<svg style="left:824px;top:480px;" width="160" height="56" viewBox="0 0 160 56"><rect x="0.5" y="1.5" width="24.6" height="24.6" fill="#ececec"/><rect x="26.25" y="1.5" width="24.6" height="24.6" fill="#ececec"/><rect x="52" y="1.5" width="24.6" height="24.6" fill="#ececec"/><rect x="77.75" y="1.5" width="24.6" height="24.6" fill="#ececec"/><rect x="103.5" y="1.5" width="24.6" height="24.6" fill="#ececec"/><rect x="129.25" y="1.5" width="24.6" height="24.6" fill="#ececec"/><rect x="0.5" y="27.1" width="24.6" height="24.6" fill="#ececec"/><rect x="26.25" y="27.1" width="24.6" height="24.6" fill="#ececec"/><rect x="3.5" y="4" width="18.5" height="18" fill="#fff" stroke="#bbb" stroke-width=".8"/><path d="M5.5,22.3 h16" stroke="#d9a0a8" stroke-width=".8" stroke-dasharray="1,1"/><rect x="3" y="17.5" width="5" height="5" fill="#fff" stroke="#1c2440" stroke-width="1.4"/><rect x="6" y="20.2" width="4.5" height="4.5" fill="#1c2440"/><rect x="34.25" y="7.5" width="13" height="13" fill="#c9c9c9"/><rect x="32.25" y="5.5" width="12" height="12" fill="#fff" stroke="#ddd" stroke-width=".6"/><rect x="28.75" y="18.1" width="5.4" height="5.4" fill="#fff" stroke="#b01020" stroke-width="1.3"/><path d="M29.15,23.1 l4.6,-4.6" stroke="#b01020" stroke-width="1.3"/><rect x="55.4" y="4.9" width="18" height="17.5" fill="#fff" stroke="#b8b0b0" stroke-width="1"/><path d="M56,22.5 h17" stroke="#d9a0a8" stroke-width=".8"/><rect x="82.25" y="9.5" width="7.5" height="7.5" fill="#fff"/><rect x="91.75" y="9.5" width="7.5" height="7.5" fill="#fff"/><path d="M90.75,19.5 h8 M90.75,22 h8" stroke="#ccc" stroke-width=".8" stroke-dasharray="1.2,1"/><rect x="80.55" y="17.9" width="5.4" height="5.4" fill="#fff" stroke="#b01020" stroke-width="1.3"/><path d="M80.95,22.9 l4.6,-4.6" stroke="#b01020" stroke-width="1.3"/><defs><linearGradient id="gsg" x1="0" y1="0" x2="1" y2="1"><stop offset="0" stop-color="#f2f2f2"/><stop offset=".5" stop-color="#bdbdbd"/><stop offset="1" stop-color="#e4e4e4"/></linearGradient><linearGradient id="gsb" x1="0" y1="0" x2="0" y2="1"><stop offset="0" stop-color="#b9e2fa"/><stop offset=".45" stop-color="#4aa6e4"/><stop offset="1" stop-color="#1c70bd"/></linearGradient><radialGradient id="gsh" cx=".5" cy="0" r=".55"><stop offset="0" stop-color="#fff" stop-opacity=".95"/><stop offset="1" stop-color="#fff" stop-opacity="0"/></radialGradient></defs><rect x="106.5" y="4.5" width="19" height="19" fill="url(#gsg)"/><rect x="132.25" y="4.5" width="19" height="19" fill="url(#gsb)"/><rect x="132.25" y="4.5" width="19" height="12" fill="url(#gsh)"/><rect x="3.5" y="30.1" width="19" height="19" fill="#62bd2c"/><path d="M7.5,39.1 c4,-5 10,-3 9,3 c-1,5 -7,5 -6,1 c1,-3 4,-1 3,1" fill="none" stroke="#e8e81c" stroke-width="2.4"/><path d="M4.5,32.1 c3,1 5,5 3,9 M12.5,43.1 c3,-1 6,1 8,4" fill="none" stroke="#8fd936" stroke-width="2"/><path d="M4.5,31.1 l5,-2 l-1,5 z" fill="#f0e82a"/><rect x="29.25" y="30.1" width="19" height="19" fill="#1d6a8c"/><path d="M33.25,33.1 c5,-4 9,0 7,6 c-2,4 -6,7 -9,9 M30.25,35.1 c4,2 6,5 8,10" fill="none" stroke="#5fb0c8" stroke-width="2.6"/><path d="M46.25,32.1 c-3,3 -6,8 -7,14" fill="none" stroke="#0e3e58" stroke-width="2.4"/><path d="M37.25,39.1 c2,4 6,6 10,6" fill="none" stroke="#8fd0dc" stroke-width="1.4"/></svg>
<div style="left:985px;top:480px;width:10px;height:120px;background:#3a3a3a;"></div>
<svg style="left:985px;top:480px;" width="10" height="120" viewBox="0 0 10 120"><path d="M2,9.5 l3,-4 l3,4 z M2,111.5 l3,4 l3,-4 z" fill="#7c7c7c"/></svg>
<svg style="left:824px;top:601px;" width="172" height="14" viewBox="0 0 172 14"><path d="M2.5,10.500 v-6 M5,10.500 v-6.500 M7,10.500 l2.400,-6.300 l2.400,6.300" fill="none" stroke="#dcdcdc" stroke-width="1.4"/><path d="M12.500,9.500 h2.600 l-1.300,1.500 z" fill="#dcdcdc"/><path d="M104,5 h10 a2.5,2.5 0 0 1 0,5 h-10 a2.5,2.5 0 0 1 0,-5 z" fill="none" stroke="#646464" stroke-width="1.2"/><path d="M125.5,3 h8 v9 h-8 z" fill="#e6e6e6"/><path d="M125.5,8 h4 v4 h-4 z" fill="#8a8a8a"/><path d="M121,5 v5 M121,12 v.6" stroke="#bbb" stroke-width="1" stroke-dasharray="1,1"/><path d="M145,5 h8 M146,5 v7.500 h6 v-7.500 M148,3.500 h2" fill="none" stroke="#606060" stroke-width="1.2"/></svg>
<div style="left:818px;top:616px;width:182px;height:1px;background:#2e2e2e;"></div>
<div style="left:818px;top:617px;width:182px;height:14px;background:#363636;"></div>
<div style="left:822px;top:617px;width:27px;height:14px;background:#4a4a4a;border-radius:2px 2px 0 0"></div>
<div class="t " aria-label="图层" style="left:825.5px;top:617.9px;height:14px;line-height:14px;font-size:9.7px;color:#e2e2e2;">图层</div>
<div style="left:851px;top:618px;width:29px;height:13px;background:#414141;border-radius:2px 2px 0 0"></div>
<div class="t " aria-label="画板" style="left:856.5px;top:617.9px;height:14px;line-height:14px;font-size:9.6px;color:#8e8e8e;">画板</div>
<svg style="left:984px;top:621px;" width="12" height="8" viewBox="0 0 12 8"><path d="M0.5,1.5 h4 l-2,2.6 z" fill="#d0d0d0"/><path d="M6,1 h6 M6,3.5 h6 M6,6 h6" stroke="#d0d0d0" stroke-width="1"/></svg>
<div style="left:818px;top:631px;width:177px;height:120px;background:#4a4a4a;"></div>
<div style="left:824px;top:635px;width:170px;height:100px;background:#454545;box-sizing:border-box;border:1px solid #3c3c3c"></div>
<div style="left:824px;top:636px;width:170px;height:16px;background:#5a6a7a;"></div>
<div style="left:840.5px;top:636.5px;width:1px;height:15.5px;background:#46515f;"></div>
<div style="left:855.5px;top:636.5px;width:1px;height:15.5px;background:#46515f;"></div>
<div style="left:966.5px;top:636.5px;width:1px;height:15.5px;background:#46515f;"></div>
<div style="left:858px;top:636.5px;width:2.6px;height:15.5px;background:#4f74f0;"></div>
<svg style="left:826px;top:640.5px;" width="11" height="8" viewBox="0 0 11 8"><path d="M0.5,4 c2.5,-4.4 7.5,-4.4 10,0 c-2.5,4.4 -7.5,4.4 -10,0 z" fill="none" stroke="#e2e2e2" stroke-width="1.1"/><circle cx="5.5" cy="3.8" r="1.9" fill="#e2e2e2"/></svg>
<svg style="left:864.5px;top:640px;" width="7" height="9" viewBox="0 0 7 9"><path d="M0.8,0.8 l5.6,3.7 l-5.6,3.7 z" fill="#f4f4f4"/></svg>
<svg style="left:878.5px;top:638px;" width="13" height="13" viewBox="0 0 13 13"><rect width="13" height="13" fill="#fff"/><path d="M4,8 l2,-3 c.4,-1.6 2.6,-1.8 3,0 c0,1 -.6,1.4 -1.4,1.4 l1.8,2.2 z" fill="#111"/><rect x="0" y="8.4" width="13" height="1.5" fill="#111"/></svg>
<div class="t " aria-label="图层 1" style="left:896px;top:637.5px;height:14px;line-height:14px;font-size:9.8px;color:#f2f2f2;">图层 1</div>
<svg style="left:971.4px;top:640.4px;" width="8" height="8" viewBox="0 0 8 8"><circle cx="4" cy="4" r="3.1" fill="none" stroke="#e8e8e8" stroke-width="1"/></svg>
<svg style="left:991px;top:637px;" width="4" height="4" viewBox="0 0 4 4"><path d="M0,0 h4 v4 z" fill="#f4f4f4"/></svg>
<div style="left:843px;top:660.5px;width:10px;height:1.4px;background:#e8e8e8;border-radius:1px"></div>
<svg style="left:824px;top:736px;" width="172" height="14" viewBox="0 0 172 14"><path d="M145,5 h8 M146,5 v7.500 h6 v-7.500 M148,3.500 h2" fill="none" stroke="#606060" stroke-width="1.2"/></svg>
<div style="left:818px;top:751px;width:182px;height:2px;background:#2e2e2e;"></div>
<div style="left:818px;top:753px;width:182px;height:14px;background:#363636;"></div>
<div style="left:822px;top:753px;width:33px;height:14px;background:#4a4a4a;border-radius:2px 2px 0 0"></div>
<div class="t " aria-label="变换" style="left:829.5px;top:753.9px;height:14px;line-height:14px;font-size:9.7px;color:#e2e2e2;">变换</div>
<div style="left:857px;top:754px;width:27px;height:13px;background:#414141;border-radius:2px 2px 0 0"></div>
<div class="t " aria-label="对齐" style="left:861.5px;top:753.9px;height:14px;line-height:14px;font-size:9.6px;color:#8e8e8e;">对齐</div>
<div style="left:887px;top:754px;width:58px;height:13px;background:#414141;border-radius:2px 2px 0 0"></div>
<div class="t " aria-label="路径查找器" style="left:892px;top:753.9px;height:14px;line-height:14px;font-size:9.6px;color:#8e8e8e;">路径查找器</div>
<svg style="left:984px;top:757px;" width="12" height="8" viewBox="0 0 12 8"><path d="M0.5,1.5 h4 l-2,2.6 z" fill="#d0d0d0"/><path d="M6,1 h6 M6,3.5 h6 M6,6 h6" stroke="#d0d0d0" stroke-width="1"/></svg>
<svg style="left:823.5px;top:757.5px;" width="5" height="8" viewBox="0 0 5 8"><path d="M0.6,3.6 l1.6,-2 l1.6,2 z M0.6,4.8 l1.6,2 l1.6,-2 z" fill="#dadada"/></svg>
<div style="left:995px;top:60px;width:5px;height:707px;background:#383838;"></div>
<div style="left:37.5px;top:756px;width:30.5px;height:11px;background:#cdcdcd;box-sizing:border-box;border:1px solid #8a8a8a"></div>
<div class="t" style="left:39.5px;top:756.5px;height:11px;line-height:11px;font-size:9.2px;color:#111">100%</div>
<div style="left:70.5px;top:756px;width:9px;height:11px;background:#595959;box-sizing:border-box;border:1px solid #434343;border-radius:1px"></div>
<svg style="left:70.5px;top:756px;" width="9" height="11" viewBox="0 0 9 11"><path d="M2.1,4.5 h4.8 l-2.4,2.8 z" fill="#e0e0e0"/></svg>
<svg style="left:86px;top:757px;" width="30" height="10" viewBox="0 0 30 10"><path d="M3.2,1.5 v7 M9,1.5 l-4.500,3.500 l4.500,3.500 z M23,1.5 l-4.500,3.500 l4.500,3.500 z" fill="#626262" stroke="#626262" stroke-width="1"/></svg>
<div style="left:115px;top:756px;width:31.5px;height:11px;background:#cdcdcd;box-sizing:border-box;border:1px solid #8a8a8a"></div>
<div class="t" style="left:118px;top:756.5px;height:11px;line-height:11px;font-size:9.2px;color:#111">1</div>
<div style="left:149px;top:756px;width:9px;height:11px;background:#595959;box-sizing:border-box;border:1px solid #434343;border-radius:1px"></div>
<svg style="left:149px;top:756px;" width="9" height="11" viewBox="0 0 9 11"><path d="M2.1,4.5 h4.8 l-2.4,2.8 z" fill="#e0e0e0"/></svg>
<svg style="left:164px;top:757px;" width="30" height="10" viewBox="0 0 30 10"><path d="M3,1.5 l4.500,3.5 l-4.500,3.500 z M15.500,1.500 l4.500,3.500 l-4.500,3.500 z M21.800,1.500 v7" fill="#626262" stroke="#626262" stroke-width="1"/></svg>
<div class="t " aria-label="选择" style="left:262px;top:754.5px;height:14px;line-height:14px;font-size:9.4px;color:#e0e0e0;">选择</div>
<svg style="left:351px;top:757.5px;" width="7" height="8" viewBox="0 0 7 8"><path d="M0.8,0.5 l5,3.500 l-5,3.500 z" fill="#e4e4e4"/></svg>
<div style="left:362px;top:755px;width:443px;height:12px;background:#3b3b3b;"></div>
<svg style="left:366px;top:757.5px;" width="7" height="8" viewBox="0 0 7 8"><path d="M6.200,0.500 l-5,3.500 l5,3.500 z" fill="#ececec"/></svg>
<div style="left:577.5px;top:756px;width:12.5px;height:11px;background:#9a9a9a;"></div>
<svg style="left:796px;top:757.5px;" width="7" height="8" viewBox="0 0 7 8"><path d="M0.8,0.500 l5,3.500 l-5,3.500 z" fill="#ececec"/></svg>
<svg style="left:806px;top:71px;" width="10" height="8" viewBox="0 0 10 8"><path d="M1.2,6.800 l3.800,-5 l3.800,5 z" fill="#f0f0f0"/></svg>
<svg style="left:806px;top:746px;" width="10" height="8" viewBox="0 0 10 8"><path d="M1.500,1.500 l3.500,4.500 l3.500,-4.500 z" fill="#e0e0e0"/></svg>
<div style="left:805px;top:754px;width:12px;height:13px;background:#444;"></div>
</div>
</body></html>
